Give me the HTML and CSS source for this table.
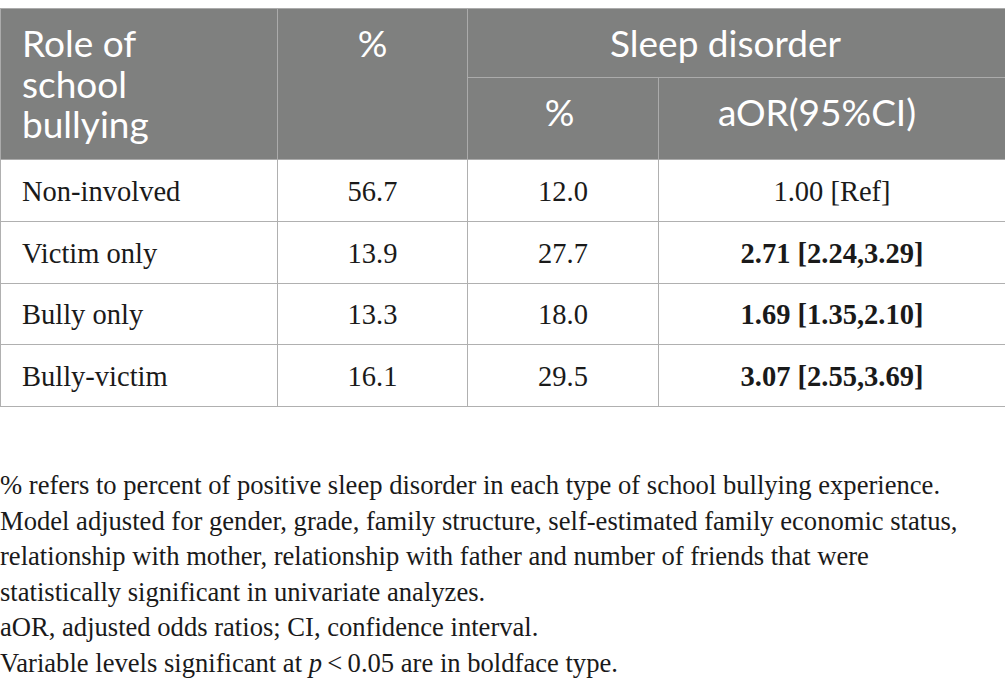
FILE: index.html
```html
<!DOCTYPE html>
<html lang="en">
<head>
<meta charset="utf-8">
<title>Sleep disorder by role of school bullying</title>
<link rel="stylesheet" href="styles.css">
</head>
<body>
<div class="page">
  <table class="data">
    <colgroup>
      <col class="c1"><col class="c2"><col class="c3"><col class="c4">
    </colgroup>
    <thead>
      <tr class="h1">
        <th rowspan="2" class="left">Role of<br>school<br>bullying</th>
        <th rowspan="2">%</th>
        <th colspan="2" class="group">Sleep disorder</th>
      </tr>
      <tr class="h2">
        <th class="pct">%</th>
        <th class="aor">aOR(95%CI)</th>
      </tr>
    </thead>
    <tbody>
      <tr><td class="left">Non-involved</td><td>56.7</td><td>12.0</td><td>1.00 [Ref]</td></tr>
      <tr><td class="left">Victim only</td><td>13.9</td><td>27.7</td><td><b>2.71 [2.24,3.29]</b></td></tr>
      <tr><td class="left">Bully only</td><td>13.3</td><td>18.0</td><td><b>1.69 [1.35,2.10]</b></td></tr>
      <tr><td class="left">Bully-victim</td><td>16.1</td><td>29.5</td><td><b>3.07 [2.55,3.69]</b></td></tr>
    </tbody>
  </table>
  <div class="notes">
    <p>% refers to percent of positive sleep disorder in each type of school bullying experience.</p>
    <p>Model adjusted for gender, grade, family structure, self-estimated family economic status, relationship with mother, relationship with father and number of friends that were statistically significant in univariate analyzes.</p>
    <p>aOR, adjusted odds ratios; CI, confidence interval.</p>
    <p>Variable levels significant at <i>p</i>&#8201;&lt;&#8201;0.05 are in boldface type.</p>
  </div>
</div>
</body>
</html>
```
FILE: styles.css
```css
html, body {
  margin: 0;
  padding: 0;
  background: #ffffff;
}
.page {
  padding-top: 8px;
  width: 1005px;
}
.data {
  border-collapse: collapse;
  table-layout: fixed;
  width: 1005px;
}
.c1 { width: 277px; }
.c2 { width: 190px; }
.c3 { width: 191px; }
.c4 { width: 347px; }
.data th {
  background: #7f807f;
  color: #ffffff;
  font-family: Lato, "Open Sans", sans-serif;
  font-weight: 400;
  font-size: 37px;
  line-height: 40.5px;
  text-align: center;
  vertical-align: top;
  padding: 14px 10px 0 10px;
  border: 1px solid #ababab;
}
.data th.left {
  text-align: left;
  padding-left: 21px;
}
.data th.group { padding-right: 32px; }
.data th.pct { padding-right: 17px; }
.data th.aor { padding-right: 40px; }
.h1 th { height: 54px; }
.h2 th { height: 67px; }
.data td {
  font-family: "Liberation Serif", "Times New Roman", serif;
  font-size: 28.5px;
  color: #1a1a1a;
  text-align: center;
  vertical-align: middle;
  height: 57.75px;
  padding: 3px 10px 0 10px;
  border: 1px solid #b0b0b0;
  line-height: 32px;
}
.data td.left {
  text-align: left;
  padding-left: 21px;
}
.data td b { font-weight: 700; }
.notes {
  margin-top: 61px;
  width: 975px;
  font-family: "Liberation Serif", "Times New Roman", serif;
  font-size: 26.6px;
  line-height: 35.5px;
  color: #1a1a1a;
}
.notes p {
  margin: 0;
}
```
